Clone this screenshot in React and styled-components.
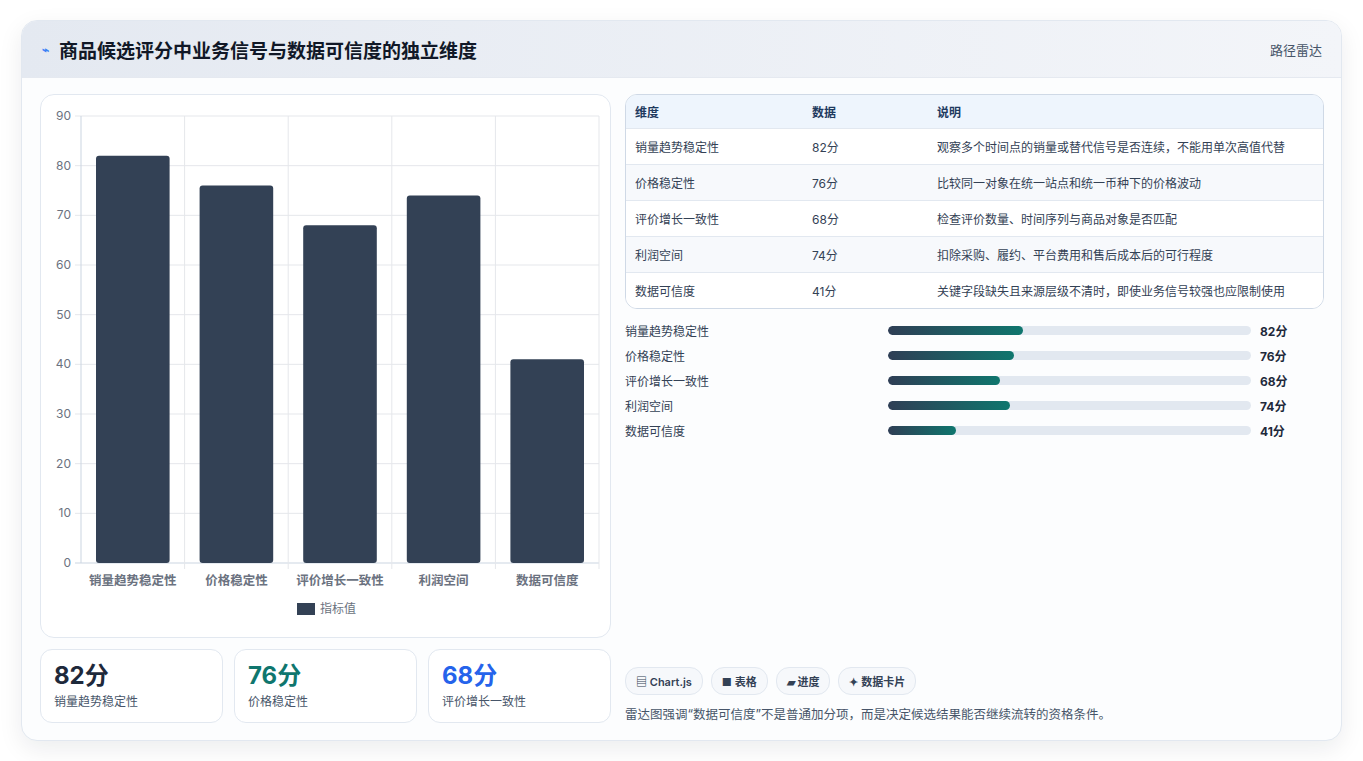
import React from "react";
import styled, { createGlobalStyle } from "styled-components";

const G = createGlobalStyle`
  body{margin:0;background:#fff;font-family:Inter,"Noto Sans CJK SC",sans-serif;color:#1e293b;}
`;
const Page = styled.div`padding:20px 21px 20px 21px;width:1363px;box-sizing:border-box;`;
const Card = styled.div`width:1321px;height:721px;box-sizing:border-box;border:1px solid #e2e8f0;border-radius:16px;background:#fcfdfe;box-shadow:0 8px 24px rgba(15,23,42,.08);overflow:hidden;display:flex;flex-direction:column;`;
const Header = styled.div`height:56px;flex:none;display:flex;align-items:center;justify-content:space-between;padding:0 19px 0 20px;background:linear-gradient(90deg,#e4e9f1,#f3f5f9);border-bottom:1px solid #e5e9f0;`;
const Title = styled.h1`margin:0;font-size:19px;font-weight:700;color:#111827;display:flex;align-items:center;gap:10px;`;
const Tag = styled.span`font-size:13px;color:#475569;`;
const Body = styled.div`flex:1;display:grid;grid-template-columns:571px 1fr;gap:14px;padding:16px 17px 18px 18px;`;
const Col = styled.div`display:flex;flex-direction:column;gap:11px;min-height:0;`;
const ChartBox = styled.div`height:544px;box-sizing:border-box;border:1px solid #e2e8f0;border-radius:14px;background:#fff;`;
const Stats = styled.div`display:grid;grid-template-columns:repeat(3,1fr);gap:11px;`;
const Stat = styled.div`height:74px;box-sizing:border-box;border:1px solid #e2e8f0;border-radius:12px;background:#fff;padding:10px 13px;`;
const StatNum = styled.div`font-size:24px;font-weight:700;color:${p=>p.c};line-height:32px;`;
const StatLbl = styled.div`font-size:12px;color:#475569;`;
const Table = styled.div`border:1px solid #cfd9e6;border-radius:12px;overflow:hidden;background:#fff;`;
const Row = styled.div`display:grid;grid-template-columns:177px 125px 1fr;height:${p=>p.h?33:35}px;align-items:center;padding-left:9px;font-size:12px;background:${p=>p.h?"#eef5fd":p.alt?"#f7f9fc":"#fff"};color:${p=>p.h?"#1e3a5f":"#334155"};font-weight:${p=>p.h?600:400};border-top:${p=>p.h?"none":"1px solid #e2e8f0"};`;
const Progress = styled.div`display:flex;flex-direction:column;gap:7px;margin-top:12px;`;
const PRow = styled.div`display:grid;grid-template-columns:263px 363px 1fr;gap:0;align-items:center;height:18px;font-size:12px;color:#334155;`;
const Track = styled.div`height:9px;border-radius:5px;background:#e2e8f0;overflow:hidden;`;
const Fill = styled.div`height:100%;border-radius:5px;background:linear-gradient(90deg,#2f3e55,#0f766e);`;
const Val = styled.span`padding-left:9px;font-weight:700;color:#1e293b;`;
const Spacer = styled.div`flex:1;`;
const Chips = styled.div`display:flex;gap:8px;`;
const Chip = styled.span`height:26px;padding:0 10px;border:1px solid #e2e8f0;border-radius:13px;background:#f6f8fb;font-size:11px;font-weight:600;color:#334155;display:flex;align-items:center;gap:4px;`;
const Note = styled.p`margin:9px 0 0;font-size:12.5px;color:#475569;`;

const data=[["销量趋势稳定性",82,"观察多个时间点的销量或替代信号是否连续，不能用单次高值代替"],["价格稳定性",76,"比较同一对象在统一站点和统一币种下的价格波动"],["评价增长一致性",68,"检查评价数量、时间序列与商品对象是否匹配"],["利润空间",74,"扣除采购、履约、平台费用和售后成本后的可行程度"],["数据可信度",41,"关键字段缺失且来源层级不清时，即使业务信号较强也应限制使用"]];

function Chart(){
  const x0=40,x1=558,yT=21,yB=468,w=(x1-x0)/5;
  const y=v=>yB-(v/90)*(yB-yT);
  return <svg width="569" height="542" style={{display:"block"}} fontFamily="Inter,'Noto Sans CJK SC',sans-serif">
    {[0,10,20,30,40,50,60,70,80,90].map(v=><g key={v}>
      <line x1={x0-6} x2={x1} y1={y(v)} y2={y(v)} stroke={v===0?"#cbd5e1":"#e5e7eb"}/>
      <text x={x0-10} y={y(v)+4} fontSize="12" fill="#6b7280" textAnchor="end">{v}</text></g>)}
    {[0,1,2,3,4,5].map(i=><line key={i} x1={x0+i*w} x2={x0+i*w} y1={yT} y2={yB+(i===0?0:6)} stroke={i===0?"#cbd5e1":"#e5e7eb"}/>)}
    {data.map((d,i)=><g key={i}>
      <rect x={x0+i*w+15} y={y(d[1])} width={w-30} height={yB-y(d[1])} rx="3" fill="#334155"/>
      <text x={x0+i*w+w/2} y={yB+22} fontSize="12.5" fill="#6b7280" textAnchor="middle" fontWeight="600">{d[0]}</text></g>)}
    <rect x="256" y="508" width="18" height="12" fill="#334155"/>
    <text x="279" y="518" fontSize="12" fill="#6b7280">指标值</text>
  </svg>;
}

export default function App(){
  return <Page><G/><Card>
    <Header><Title><span style={{color:"#3b82f6",fontSize:12}}>⌁</span>商品候选评分中业务信号与数据可信度的独立维度</Title><Tag>路径雷达</Tag></Header>
    <Body>
      <Col>
        <ChartBox><Chart/></ChartBox>
        <Stats>
          <Stat><StatNum c="#1e293b">82分</StatNum><StatLbl>销量趋势稳定性</StatLbl></Stat>
          <Stat><StatNum c="#0f766e">76分</StatNum><StatLbl>价格稳定性</StatLbl></Stat>
          <Stat><StatNum c="#2563eb">68分</StatNum><StatLbl>评价增长一致性</StatLbl></Stat>
        </Stats>
      </Col>
      <Col style={{gap:0}}>
        <Table>
          <Row h><span>维度</span><span>数据</span><span>说明</span></Row>
          {data.map((d,i)=><Row key={i} alt={i%2===1}><span>{d[0]}</span><span>{d[1]}分</span><span>{d[2]}</span></Row>)}
        </Table>
        <Progress>
          {data.map((d,i)=><PRow key={i}><span>{d[0]}</span><Track><Fill style={{width:(d[1]*0.455)+"%"}}/></Track><Val>{d[1]}分</Val></PRow>)}
        </Progress>
        <Spacer/>
        <Chips><Chip>▤ Chart.js</Chip><Chip>■ 表格</Chip><Chip>▰ 进度</Chip><Chip>✦ 数据卡片</Chip></Chips>
        <Note>雷达图强调“数据可信度”不是普通加分项，而是决定候选结果能否继续流转的资格条件。</Note>
      </Col>
    </Body>
  </Card></Page>;
}
